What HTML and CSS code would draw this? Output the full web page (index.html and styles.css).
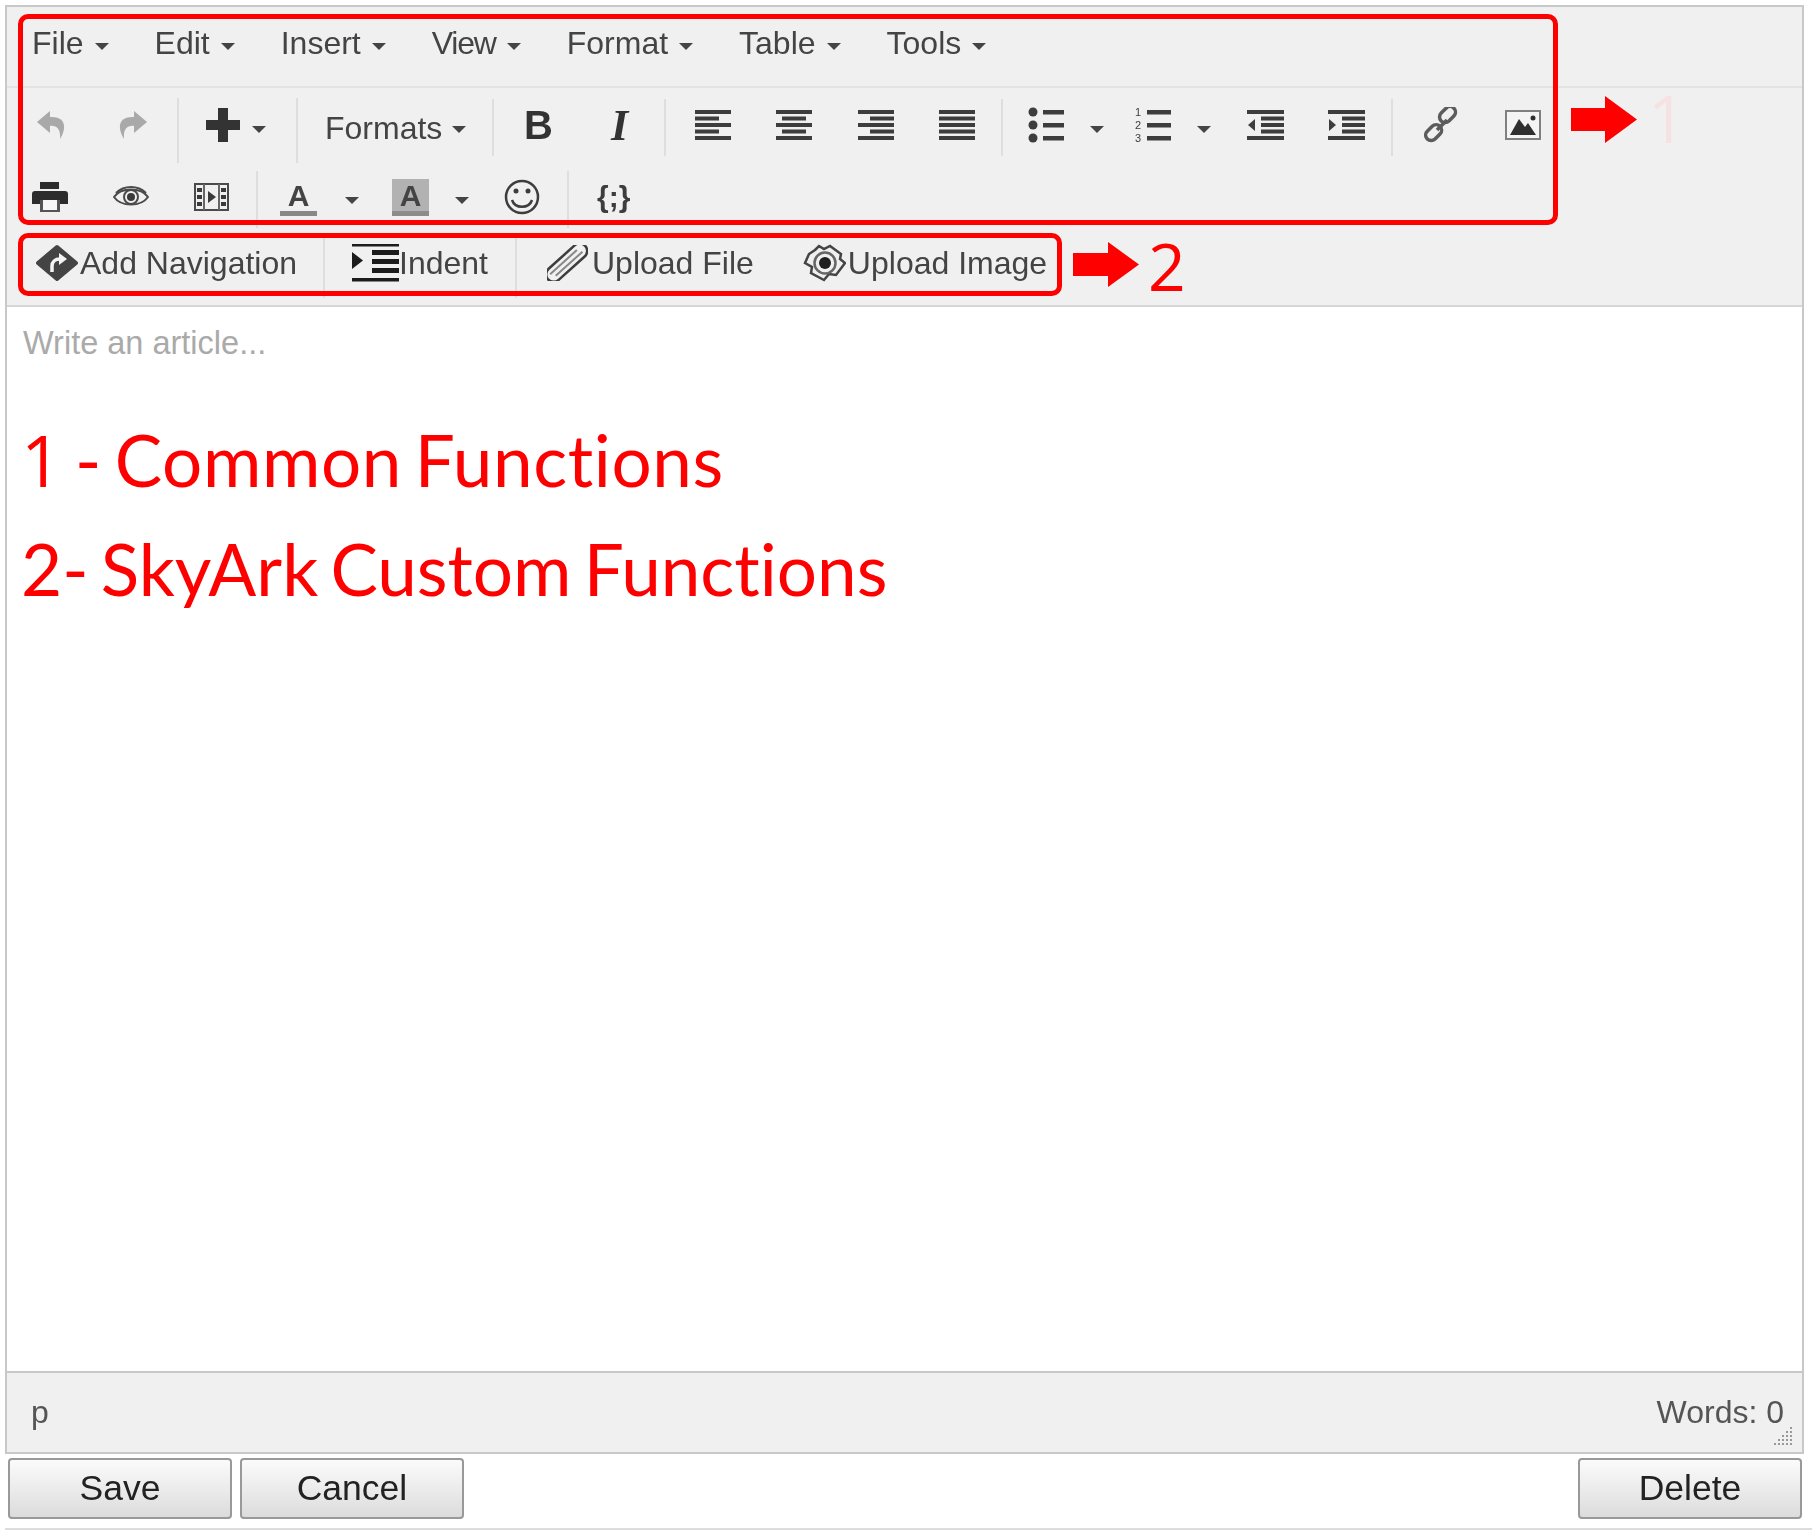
FILE: index.html

```html
<!DOCTYPE html>
<html lang="en">
<head>
  <meta charset="UTF-8" />
  <title>Article editor</title>
  <link rel="stylesheet" href="styles.css">
</head>
<body>

<div class="editor">
  <div class="chrome menu">
    <span class="menu-item">File<i class="caret"></i></span>
    <span class="menu-item">Edit<i class="caret"></i></span>
    <span class="menu-item">Insert<i class="caret"></i></span>
    <span class="menu-item tight">View<i class="caret"></i></span>
    <span class="menu-item">Format<i class="caret"></i></span>
    <span class="menu-item">Table<i class="caret"></i></span>
    <span class="menu-item">Tools<i class="caret"></i></span>
  </div>

  <div class="chrome toolbar row-one">
    <span class="btn"><svg width="29" height="30" viewBox="0 0 29 30"><path fill="#a9a9a9" d="M13 1 0 12l13 11v-7c7-1 11 4 10 13 7-11 6-23-10-22z"/></svg></span>
    <span class="btn"><svg width="29" height="30" viewBox="0 0 29 30"><path fill="#a9a9a9" d="M16 1l13 11-13 11v-7C9 15 5 20 6 29-1 18 0 6 16 7z"/></svg></span>
    <i class="sep tall"></i>
    <span class="btn plus-btn"><svg width="34" height="34" viewBox="0 0 34 34"><path fill="#333" d="M12 0h10v12h12v10H22v12H12V22H0V12h12z"/></svg><i class="caret low"></i></span>
    <i class="sep tall"></i>
    <span class="btn formats-btn"><span class="formats">Formats</span><i class="caret low"></i></span>
    <i class="sep"></i>
    <span class="btn glyph-bold">B</span>
    <span class="btn glyph-italic">I</span>
    <i class="sep align-sep"></i>
    <span class="btn al"><svg width="36" height="30" viewBox="0 0 36 30"><path fill="#3d3d3d" d="M0 0h36v4H0zM0 6.500h24v4H0zM0 13h36v4H0zM0 19.500h24v4H0zM0 26h36v4H0z"/></svg></span>
    <span class="btn al"><svg width="36" height="30" viewBox="0 0 36 30"><path fill="#3d3d3d" d="M0 0h36v4H0zM6 6.500h24v4H6zM0 13h36v4H0zM6 19.500h24v4H6zM0 26h36v4H0z"/></svg></span>
    <span class="btn al"><svg width="36" height="30" viewBox="0 0 36 30"><path fill="#3d3d3d" d="M0 0h36v4H0zM12 6.500h24v4H12zM0 13h36v4H0zM12 19.500h24v4H12zM0 26h36v4H0z"/></svg></span>
    <span class="btn al"><svg width="36" height="30" viewBox="0 0 36 30"><path fill="#3d3d3d" d="M0 0h36v4H0zM0 6.500h36v4H0zM0 13h36v4H0zM0 19.500h36v4H0zM0 26h36v4H0z"/></svg></span>
    <i class="sep list-sep"></i>
    <span class="btn list-btn bullets"><svg width="36" height="36" viewBox="0 0 36 36"><g fill="#3d3d3d"><circle cx="5" cy="5" r="4.500"/><circle cx="5" cy="18" r="4.500"/><circle cx="5" cy="31" r="4.500"/><path d="M15 3h21v4.500H15zM15 16h21v4.500H15zM15 29h21v4.500H15z"/></g></svg><i class="caret low"></i></span>
    <span class="btn list-btn"><svg width="36" height="38" viewBox="0 0 36 38"><g fill="#3d3d3d"><text x="0" y="10" class="tiny">1</text><text x="0" y="23" class="tiny">2</text><text x="0" y="36" class="tiny">3</text><path d="M12 4h24v4.500H12zM12 17h24v4.500H12zM12 30h24v4.500H12z"/></g></svg><i class="caret low"></i></span>
    <span class="btn"><svg width="37" height="30" viewBox="0 0 37 30"><path fill="#3d3d3d" d="M0 0h37v4H0zM14 6.500h23v4H14zM14 13h23v4H14zM14 19.500h23v4H14zM0 26h37v4H0zM8 9v12l-7-6z"/></svg></span>
    <span class="btn"><svg width="37" height="30" viewBox="0 0 37 30"><path fill="#3d3d3d" d="M0 0h37v4H0zM14 6.500h23v4H14zM14 13h23v4H14zM14 19.500h23v4H14zM0 26h37v4H0zM1 9v12l7-6z"/></svg></span>
    <i class="sep after-indent"></i>
    <span class="btn"><svg width="36" height="36" viewBox="0 0 36 36"><g fill="none" stroke="#5c5c5c" stroke-width="3.500"><rect x="17" y="1" width="18" height="11" rx="5.500" transform="rotate(-45 26 10)"/><rect x="1" y="20" width="18" height="11" rx="5.500" transform="rotate(-45 10 26)"/><path d="M13 23 23 13"/></g></svg></span>
    <span class="btn"><svg width="36" height="30" viewBox="0 0 36 30"><rect x="1" y="1" width="34" height="28" fill="#f4f4f4" stroke="#808080" stroke-width="2"/><path fill="#2f2f2f" d="M5 25 14 9l6 8 3-4 8 12z"/><circle cx="28" cy="8" r="2.500" fill="#2f2f2f"/></svg></span>
  </div>

  <div class="chrome toolbar row-two">
    <span class="btn"><svg width="36" height="30" viewBox="0 0 36 30"><path fill="#2c2c2c" d="M8 0h19v7H8zM3 9h30a3 3 0 0 1 3 3v10h-8v-4H8v4H0V12a3 3 0 0 1 3-3z"/><path fill="#555" d="M8 18h20v12H8z"/><path fill="#f7f7f7" d="M11 18h14v10H11z"/></svg></span>
    <span class="btn"><svg width="36" height="24" viewBox="0 0 36 24"><g fill="none" stroke="#4a4a4a" stroke-width="2"><path d="M1 12C8 2 28 2 35 12 28 22 8 22 1 12z"/><path d="M3 8C11 0 25 0 33 8"/><circle cx="18" cy="12" r="7"/></g><circle cx="18" cy="12" r="4" fill="#3a3a3a"/></svg></span>
    <span class="btn"><svg width="35" height="28" viewBox="0 0 35 28"><rect x="1" y="1" width="33" height="26" fill="none" stroke="#4a4a4a" stroke-width="2"/><path fill="#3a3a3a" d="M3 5h5v4H3zM3 12h5v4H3zM3 19h5v4H3zM27 5h5v4h-5zM27 12h5v4h-5zM27 19h5v4h-5zM14 8v12l8-6z"/><path fill="none" stroke="#666" stroke-width="2" d="M10 1v26M25 1v26"/></svg></span>
    <i class="sep media-sep"></i>
    <span class="color-btn fore">A</span><i class="caret fore-caret"></i>
    <span class="color-btn back">A</span><i class="caret back-caret"></i>
    <svg class="smile" width="36" height="36" viewBox="0 0 36 36"><g fill="none" stroke="#3d3d3d" stroke-width="2.500"><circle cx="18" cy="18" r="16"/><path d="M8 21c3 9 17 9 20 0"/></g><circle cx="12" cy="12" r="2.500" fill="#3d3d3d"/><circle cx="24" cy="12" r="2.500" fill="#3d3d3d"/></svg>
    <i class="sep smile-sep"></i>
    <span class="code-btn">{;}</span>
  </div>

  <div class="chrome custom-row">
    <span class="custom first"><svg width="44" height="38" viewBox="0 0 44 38"><path fill="#444" stroke="#444" stroke-width="4" stroke-linejoin="round" d="M22 3 41 19 22 35 3 19z"/><path fill="none" stroke="#f4f4f4" stroke-width="3.500" d="M17 28v-6c0-4 3-7 8-7"/><path fill="#f4f4f4" d="M24 9l8 6-8 6z"/></svg><span class="nav-label">Add Navigation</span></span>
    <i class="sep custom-sep nav-sep"></i>
    <span class="custom second"><svg width="47" height="38" viewBox="0 0 47 38"><path fill="#1c1c1c" d="M0 0h47v2.500H0zM20 6h27v5H20zM20 15h27v5H20zM20 24h27v5H20zM0 34h47v3.500H0zM0 8v17l11-8.500z"/></svg><span>Indent</span></span>
    <i class="sep custom-sep indent-sep"></i>
    <span class="custom third"><svg width="41" height="36" viewBox="0 0 41 36"><g fill="none" transform="rotate(-42 20 18)"><rect x="-5" y="10" width="50" height="15" rx="7.500" stroke="#3d3d3d" stroke-width="2.500"/><path stroke="#888" stroke-width="2" d="M0 15h36M3 20h36"/></g></svg><span class="near-clip">Upload File</span></span>
    <span class="custom fourth"><svg width="43" height="38" viewBox="0 0 43 38"><path fill="none" stroke="#444" stroke-width="2.500" d="M12 6l4-4 5 3 6-3 11 8-1 5 5 4-9 12-7-1-5 6L8 29l1-6-7-4 4-9z"/><circle cx="22" cy="19" r="10.500" fill="none" stroke="#666" stroke-width="2.500"/><circle cx="22" cy="19" r="6" fill="#1f1f1f"/></svg><span class="near">Upload Image</span></span>
  </div>

  <div class="content">
    <div class="placeholder">Write an article...</div>
    <div class="note first-note"><span class="digit">1</span> - Common Functions</div>
    <div class="note">2- SkyArk Custom Functions</div>
  </div>

  <div class="chrome status">
    <span>p</span>
    <span class="words">Words: 0</span>
    <svg class="grip" width="20" height="20" viewBox="0 0 20 20"><path fill="#999" d="M16 2h2v2h-2zM16 6h2v2h-2zM12 6h2v2h-2zM16 10h2v2h-2zM12 10h2v2h-2zM8 10h2v2H8zM16 14h2v2h-2zM12 14h2v2h-2zM8 14h2v2H8zM4 14h2v2H4zM16 18h2v2h-2zM12 18h2v2h-2zM8 18h2v2H8zM4 18h2v2H4zM0 18h2v2H0z"/></svg>
  </div>
</div>

<div class="actions">
  <button>Save</button>
  <button>Cancel</button>
  <button class="delete">Delete</button>
</div>
<div class="foot-line"></div>

<!-- red annotations drawn over the screenshot -->
<div class="mark mark-one"></div>
<div class="mark mark-two"></div>
<svg class="arrow arrow-one" width="66" height="47" viewBox="0 0 66 47"><path fill="#f00" d="M0 12h34V0l32 23.500L34 47V35H0z"/></svg>
<svg class="arrow arrow-two" width="66" height="45" viewBox="0 0 66 45"><path fill="#f00" d="M0 11h35V0l31 22.500L35 45V34H0z"/></svg>
<span class="num num-one">1</span>
<span class="num num-two">2</span>

</body>
</html>
```

FILE: styles.css

```css
* { box-sizing: border-box; }
body { margin: 0; padding: 5px 0 0 5px; background-color: #fff; font-family: 'Liberation Sans', Arial, sans-serif; font-size: 32px; color: #444; position: relative; height: 1530px; overflow: hidden; }
i { display: block; font-style: normal; }

.editor { width: 1799px; border: 2px solid #c8c8c8; }
.chrome { background-color: #f0f0f0; filter: blur(0.7px); }

.menu { height: 81px; display: flex; align-items: center; gap: 46px; padding: 0 0 7px 25px; border-bottom: 2px solid #e3e3e3; }
.menu-item { display: flex; align-items: center; white-space: nowrap; }
.tight { letter-spacing: -1.2px; }
.caret { width: 0; height: 0; border-left: 7px solid transparent; border-right: 7px solid transparent; border-top: 7px solid #444; margin-left: 11px; margin-top: 6px; }
.caret.low { margin-top: 8px; }

.toolbar { display: flex; align-items: center; padding-left: 4px; }
.row-one { height: 76px; padding-bottom: 2px; }
.row-two { height: 68px; padding-left: 2px; padding-bottom: 2px; }
.btn { width: 81px; height: 48px; flex: none; display: flex; align-items: center; justify-content: center; }
.sep { width: 2px; height: 57px; flex: none; background-color: #dedede; margin: 4px 4px 0 4px; }
.sep.tall { height: 65px; margin-top: 10px; }

.plus-btn { width: 109px; justify-content: flex-start; padding-left: 23px; }
.plus-btn .caret { margin-left: 12px; }
.formats-btn { width: 186px; justify-content: flex-start; padding-left: 23px; }
.formats { margin-top: 6px; }
.formats-btn .caret { margin-left: 10px; }
.glyph-bold { font-weight: bold; font-size: 40px; color: #333; }
.glyph-italic { font-family: 'Liberation Serif', serif; font-weight: bold; font-style: italic; font-size: 44px; color: #333; }
.align-sep { margin-right: 6px; }
.al { width: 81.5px; }
.list-sep { margin-left: 3px; margin-right: 6px; }
.list-btn { width: 109px; justify-content: flex-start; padding-left: 19px; }
.list-btn .caret { margin-left: 26px; }
.bullets { width: 107px; }
.tiny { font-size: 11px; font-family: 'Liberation Sans', sans-serif; }
.after-indent { margin-left: 4px; margin-right: 8px; }

.media-sep { margin: 4px 6px 0 4px; }
.color-btn { width: 37px; flex: none; height: 37px; display: flex; align-items: flex-start; justify-content: center; font-weight: bold; font-size: 30px; line-height: 34px; color: #444; }
.fore { margin-left: 16px; border-bottom: 5px solid #888; }
.back { margin-left: 33px; background-color: #b2b2b2; border-bottom: 5px solid #8c8c8c; }
.fore-caret { margin-left: 28px; }
.back-caret { margin-left: 26px; }
.smile { margin-left: 35px; flex: none; }
.smile-sep { margin-left: 27px; }
.code-btn { margin-left: 24px; font-weight: bold; font-size: 30px; color: #3d3d3d; }

.custom-row { height: 75px; display: flex; align-items: center; padding-bottom: 11px; border-bottom: 2px solid #d6d6d6; }
.custom { display: flex; align-items: center; flex: none; white-space: nowrap; }
.custom svg { flex: none; }
.nav-label { margin-left: 1px; }
.near { margin-left: 2px; }
.near-clip { margin-left: 4px; }
.first { margin-left: 28px; }
.second { margin-left: 27px; }
.third { margin-left: 30px; }
.fourth { margin-left: 49px; }
.custom-sep { height: 60px; align-self: flex-start; margin: 6px 0 0 0; }
.nav-sep { margin-left: 26px; }
.indent-sep { margin-left: 27px; }

.content { height: 1064px; padding: 12px 16px 0; background-color: #fff; }
.placeholder { height: 48px; line-height: 48px; font-size: 32.500px; color: #aaa; }
.note { height: 109px; line-height: 109px; margin-left: -2px; font-family: Lato, sans-serif; font-size: 71px; word-spacing: -6px; font-variant-ligatures: none; color: #f00; white-space: nowrap; }
.digit { font-family: 'Open Sans', sans-serif; }
.first-note { margin-top: 38px; letter-spacing: 0.6px; }

.status { height: 81px; display: flex; align-items: center; justify-content: space-between; padding: 0 18px 0 24px; border-top: 2px solid #c8c8c8; position: relative; color: #555; }
.grip { position: absolute; right: 8px; bottom: 7px; }

.actions { display: flex; gap: 8px; padding: 4px 2px 0 3px; width: 1799px; }
button { width: 224px; height: 61px; font-family: inherit; font-size: 35.500px; color: #222; background: linear-gradient(#fbfbfb, #dcdcdc); border: 2px solid #999; border-radius: 4px; padding: 0; filter: blur(0.6px); }
.delete { margin-left: auto; }
.foot-line { height: 2px; margin: 9px 0 0 0; background-color: #ddd; }

.mark { position: absolute; border: 5px solid #f00; border-radius: 10px; }
.mark-one { left: 18px; top: 14px; width: 1540px; height: 211px; }
.mark-two { left: 18px; top: 233px; width: 1044px; height: 63px; }
.arrow { position: absolute; }
.arrow-one { left: 1571px; top: 96px; }
.arrow-two { left: 1073px; top: 242px; }
.num { position: absolute; font-family: 'Open Sans', sans-serif; font-size: 66px; line-height: 66px; }
.num-one { left: 1648px; top: 84px; color: #f6e2e2; }
.num-two { left: 1148px; top: 232px; color: #f00; }
```
